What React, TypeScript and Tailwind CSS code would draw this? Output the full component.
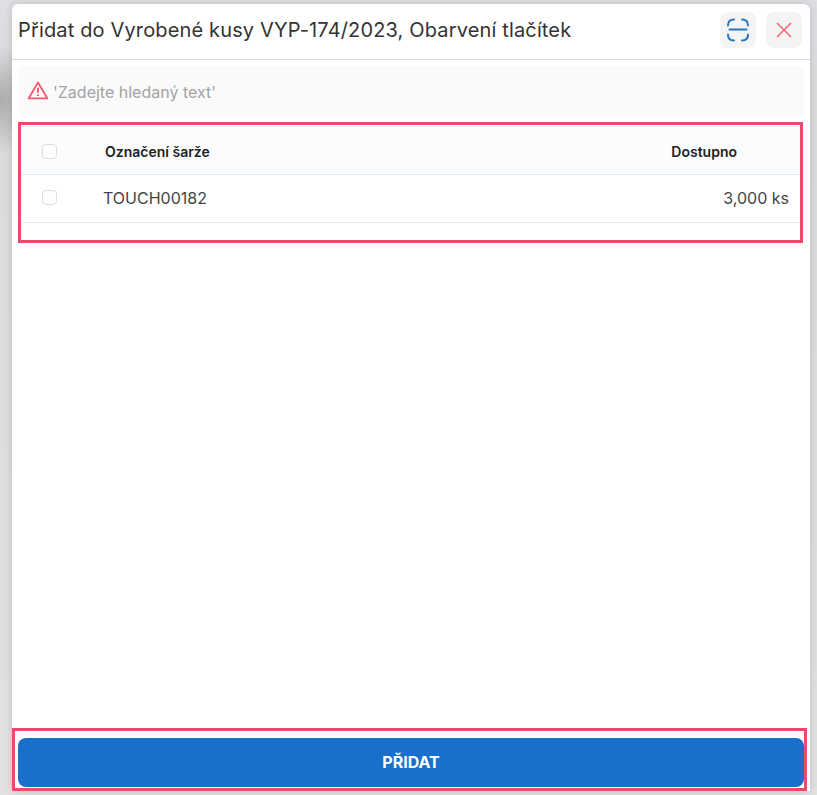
const AlertIcon = () => (
  <svg width="22" height="20" viewBox="0 0 22 20" fill="none" className="shrink-0">
    <path d="M11 1.500 1.700 17.300h18.600L11 1.500Z" stroke="#fb5a6c" strokeWidth="1.800" strokeLinejoin="round" />
    <path d="M11 6.800v5" stroke="#fb5a6c" strokeWidth="1.900" />
    <path d="M11 13.200v1.900" stroke="#fb5a6c" strokeWidth="1.900" />
  </svg>
);

const ScanIcon = () => (
  <svg width="24" height="24" viewBox="0 0 24 24" fill="none">
    <path
      d="M2 7.500C2 4 4 1.500 8 1.500M16 1.500c4 0 6 2.500 6 6M2 16.500c0 3.500 2 6 6 6M16 22.500c4 0 6-2.500 6-6"
      stroke="#2a75c0"
      strokeWidth="2"
      strokeLinecap="round"
    />
    <path d="M3.500 11.500h17" stroke="#2a75c0" strokeWidth="2" strokeLinecap="round" />
  </svg>
);

const CloseIcon = () => (
  <svg width="16" height="16" viewBox="0 0 16 16" fill="none">
    <path d="M1 1l14 14M15 1 1 15" stroke="#fb5a6c" strokeWidth="1.400" />
  </svg>
);

const Checkbox = () => (
  <div className="w-[15px] h-[15px] rounded-[4px] border border-[#dedede] bg-white" />
);

const App = () => {
  return (
    <div className="w-[817px] h-[795px] bg-[radial-gradient(40px_55px_at_0px_100px,rgba(0,0,0,0.22),transparent),linear-gradient(180deg,#dfe0e4_0px,#dcdcde_100px,#e2e2e2_795px)] pl-3 pt-1 overflow-hidden font-['Inter',sans-serif]">
      <div className="w-[798px] h-[787px] bg-white rounded-t-md shadow-[0_0_10px_rgba(0,0,0,0.16)] flex flex-col">
        <div className="h-[56px] shrink-0 border-b border-[#d9d9d9] flex items-center pl-[6px] pr-2">
          <h1 className="flex-1 text-[20px] leading-[24px] text-[#333333] tracking-[0.15px] mb-[4px]">
            Přidat do Vyrobené kusy VYP-174/2023, Obarvení tlačítek
          </h1>
          <div className="flex gap-[10px] mb-[4px]">
            <button className="w-9 h-9 rounded-lg bg-[#f4f4f5] flex items-center justify-center">
              <ScanIcon />
            </button>
            <button className="w-9 h-9 rounded-lg bg-[#f4f4f5] flex items-center justify-center">
              <CloseIcon />
            </button>
          </div>
        </div>

        <div className="mt-[6px] mx-[6px] h-[51px] shrink-0 rounded-md bg-[#fafafa] flex items-center gap-[4px] pl-[9px] pb-[1px]">
          <AlertIcon />
          <span className="text-[16px] text-[#a3a3a3] pt-[2px]">'Zadejte hledaný text'</span>
        </div>

        <div className="mt-[5px] ml-[6px] w-[785px] h-[121px] shrink-0 border-[3px] border-[#f0476c] pt-[1px]">
          <div className="h-[49px] pt-[2px] bg-[#fbfcfe] border-t border-b border-[#e3ecf4] flex items-center text-[14px] font-semibold text-[#222222]">
            <div className="w-[84px] pl-[21px]">
              <Checkbox />
            </div>
            <div className="flex-1">Označení šarže</div>
            <div className="pr-[63px]">Dostupno</div>
          </div>
          <div className="h-[48px] pb-[2px] border-b border-[#e3ecf4] flex items-center text-[16px] text-[#444444]">
            <div className="w-[82px] pl-[21px]">
              <Checkbox />
            </div>
            <div className="flex-1">TOUCH00182</div>
            <div className="pr-[11px]">3,000 ks</div>
          </div>
        </div>

        <div className="flex-1" />

        <div className="w-[795px] h-[63px] shrink-0 border-[3px] border-[#f0476c] pt-[7px] pl-[3px] pb-[2px]">
          <button className="w-[786px] h-[49px] pb-[2px] rounded-lg bg-[#1a6fca] text-white text-[16px] font-bold">
            PŘIDAT
          </button>
        </div>
      </div>
    </div>
  );
};

export default App;
